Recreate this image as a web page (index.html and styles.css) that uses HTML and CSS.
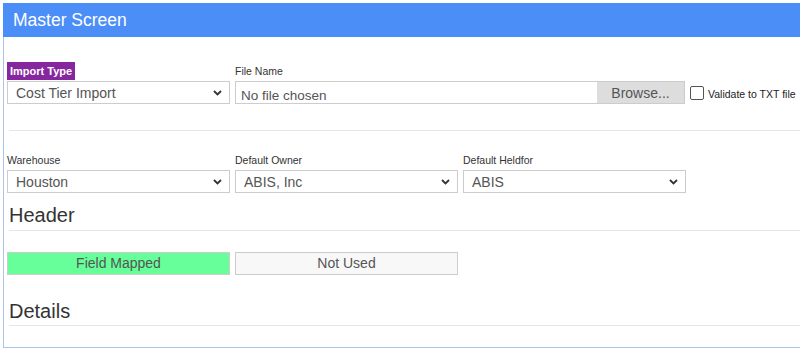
FILE: index.html
```html
<!DOCTYPE html>
<html lang="en">
<head>
    <meta charset="UTF-8">
    <meta name="viewport" content="width=device-width, initial-scale=1.0">
    <title>Master Screen</title>
    <link rel="stylesheet" href="styles.css">
</head>
<body>
    <div class="panel">
        <div class="panel-title">Master Screen</div>

        <div class="panel-body">
            <div class="row">
                <div class="field">
                    <label class="tag-label">Import Type</label>
                    <div class="control select">
                        <span>Cost Tier Import</span>
                        <svg class="chevron" width="9" height="6" viewBox="0 0 9 6"><path d="M1 1l3.5 3.5L8 1" fill="none" stroke="#333" stroke-width="1.8"/></svg>
                    </div>
                </div>

                <div class="field file-field">
                    <label class="label">File Name</label>
                    <div class="control file">
                        <span class="file-text">No file chosen</span>
                        <span class="browse">Browse...</span>
                    </div>
                </div>

                <div class="check-field">
                    <span class="checkbox"></span>
                    <span class="check-text">Validate to TXT file</span>
                </div>
            </div>

            <hr class="divider">

            <div class="row">
                <div class="field">
                    <label class="label">Warehouse</label>
                    <div class="control select">
                        <span>Houston</span>
                        <svg class="chevron" width="9" height="6" viewBox="0 0 9 6"><path d="M1 1l3.5 3.5L8 1" fill="none" stroke="#333" stroke-width="1.8"/></svg>
                    </div>
                </div>
                <div class="field">
                    <label class="label">Default Owner</label>
                    <div class="control select">
                        <span>ABIS, Inc</span>
                        <svg class="chevron" width="9" height="6" viewBox="0 0 9 6"><path d="M1 1l3.5 3.5L8 1" fill="none" stroke="#333" stroke-width="1.8"/></svg>
                    </div>
                </div>
                <div class="field">
                    <label class="label">Default Heldfor</label>
                    <div class="control select">
                        <span>ABIS</span>
                        <svg class="chevron" width="9" height="6" viewBox="0 0 9 6"><path d="M1 1l3.5 3.5L8 1" fill="none" stroke="#333" stroke-width="1.8"/></svg>
                    </div>
                </div>
            </div>

            <div class="section">
                <h3>Header</h3>
                <hr>
            </div>

            <div class="row legend">
                <div class="legend-box mapped">Field Mapped</div>
                <div class="legend-box unused">Not Used</div>
            </div>

            <div class="section details">
                <h3>Details</h3>
                <hr>
            </div>
        </div>
    </div>
</body>
</html>
```

FILE: styles.css
```css
* {
    box-sizing: border-box;
}

body {
    margin: 3px 0 0 3px;
    overflow: hidden;
    font-family: 'Liberation Sans', Arial, sans-serif;
    background-color: white;
}

.panel {
    width: 830px;
    border: 1px solid #a9c4ef;
    border-top: none;
}

.panel-title {
    margin-left: -1px;
    height: 34px;
    line-height: 34px;
    padding-left: 10px;
    background-color: #4b8ef7;
    color: white;
    font-size: 17.5px;
}

.panel-body {
    padding: 25px 0 21px 3px;
}

.row {
    display: flex;
    align-items: flex-end;
    gap: 5px;
}

.field {
    width: 223px;
    display: flex;
    flex-direction: column;
    gap: 1px;
}

.file-field {
    width: 450px;
}

.label {
    font-size: 10.5px;
    line-height: 18px;
    color: #333;
}

.tag-label {
    align-self: flex-start;
    background-color: #87279f;
    color: white;
    font-size: 11px;
    font-weight: bold;
    line-height: 18px;
    padding: 0 3px;
}

.control {
    height: 23px;
    border: 1px solid #ccc;
    display: flex;
    align-items: center;
    font-size: 14px;
    color: #555;
    background-color: white;
}

.select {
    justify-content: space-between;
    padding: 0 7px 0 8px;
}

.chevron {
    margin-top: 1px;
}

.file {
    padding-left: 5px;
}

.file-text {
    flex: 1;
    padding-top: 6px;
    font-size: 13.5px;
}

.browse {
    width: 87px;
    height: 100%;
    background-color: #ddd;
    text-align: center;
    line-height: 21px;
    padding-top: 1px;
}

.check-field {
    display: flex;
    align-items: flex-end;
    gap: 4px;
    margin-bottom: 4px;
}

.checkbox {
    width: 14px;
    height: 14px;
    border: 1px solid #555;
    border-radius: 2px;
    background-color: white;
}

.check-text {
    font-size: 10.5px;
    line-height: 11px;
    color: #222;
}

.divider {
    margin: 26px 0 20px 2px;
    border: none;
    border-top: 1px solid #e6e6e6;
}

.section {
    padding-left: 2px;
    margin-top: 11px;
}

.section h3 {
    margin: 0;
    font-size: 20px;
    font-weight: normal;
    line-height: 22px;
    color: #333;
}

.section hr {
    margin: 4px 0 0;
    border: none;
    border-top: 1px solid #e6e6e6;
}

.legend {
    margin-top: 21px;
}

.legend-box {
    width: 223px;
    height: 23px;
    line-height: 21px;
    border: 1px solid #ccc;
    text-align: center;
    font-size: 14px;
    color: #555;
}

.mapped {
    background-color: #66ff99;
}

.unused {
    background-color: #f8f8f8;
}

.details {
    margin-top: 25px;
}

.details hr {
    margin-top: 3px;
}
```
